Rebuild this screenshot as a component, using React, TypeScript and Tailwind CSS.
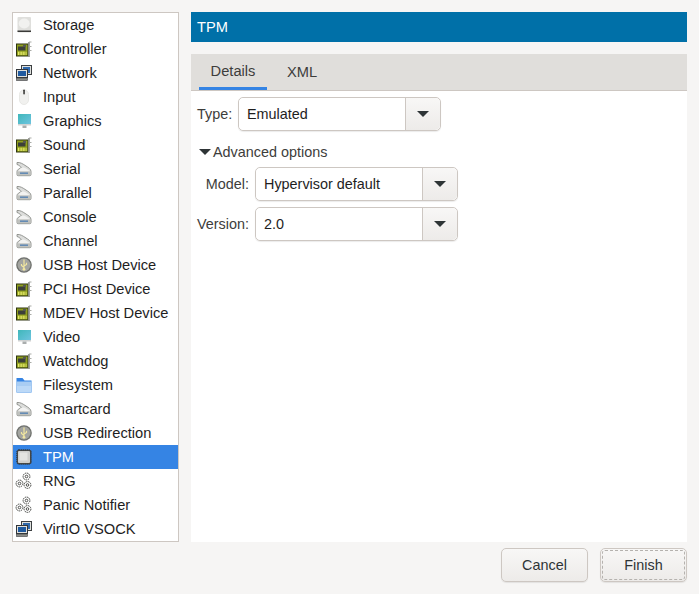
import React from "react";

type Kind = "disk" | "card" | "net" | "mouse" | "monitor" | "serial" | "usb" | "folder" | "chip" | "gears";

const devices: { label: string; icon: Kind }[] = [
  { label: "Storage", icon: "disk" },
  { label: "Controller", icon: "card" },
  { label: "Network", icon: "net" },
  { label: "Input", icon: "mouse" },
  { label: "Graphics", icon: "monitor" },
  { label: "Sound", icon: "card" },
  { label: "Serial", icon: "serial" },
  { label: "Parallel", icon: "serial" },
  { label: "Console", icon: "serial" },
  { label: "Channel", icon: "serial" },
  { label: "USB Host Device", icon: "usb" },
  { label: "PCI Host Device", icon: "card" },
  { label: "MDEV Host Device", icon: "card" },
  { label: "Video", icon: "monitor" },
  { label: "Watchdog", icon: "card" },
  { label: "Filesystem", icon: "folder" },
  { label: "Smartcard", icon: "serial" },
  { label: "USB Redirection", icon: "usb" },
  { label: "TPM", icon: "chip" },
  { label: "RNG", icon: "gears" },
  { label: "Panic Notifier", icon: "gears" },
  { label: "VirtIO VSOCK", icon: "net" },
];

const Gear = ({ cx, cy }: { cx: number; cy: number }) => (
  <g stroke="#3f413d">
    <circle cx={cx} cy={cy} r="3.4" fill="none" strokeWidth="1" strokeDasharray="1.6 0.7" />
    <circle cx={cx} cy={cy} r="1.3" fill="#fff" strokeWidth="0.9" />
  </g>
);

const DeviceIcon = ({ kind }: { kind: Kind }) => {
  switch (kind) {
    case "disk":
      return (
        <svg viewBox="0 0 16 16" className="w-4 h-4">
          <rect x="1.5" y="0" width="13.5" height="15.5" rx="1" fill="#dfdfdc" />
          <ellipse cx="8.2" cy="6.5" rx="5.5" ry="5" fill="#f1f1ef" />
          <rect x="1.5" y="13.5" width="13.5" height="1.5" fill="#3a3a38" />
        </svg>
      );
    case "card":
      return (
        <svg viewBox="0 0 16 16" className="w-4 h-4">
          <rect x="0.5" y="3" width="11.5" height="12" fill="#8f9f1e" stroke="#2e3410" />
          <rect x="2" y="5.5" width="7.5" height="4" fill="#3b3f38" />
          <rect x="7" y="4" width="3" height="2" fill="#555753" />
          <path d="M2 11.5h8.5M2 13.2h8.5" stroke="#e4e86a" strokeWidth="1.7" strokeDasharray="1 0.6" />
          <path d="M13 1v15" stroke="#888a85" strokeWidth="1.6" />
          <path d="M13 1h2.5M13 5.5h2.5M13 9.5h2.5" stroke="#a9aba6" />
        </svg>
      );
    case "net":
      return (
        <svg viewBox="0 0 16 16" className="w-4 h-4">
          <rect x="5.5" y="0.5" width="10" height="9" fill="#dfe1de" stroke="#3c3f41" />
          <rect x="7" y="2" width="7" height="6" fill="#2f69ad" />
          <rect x="0.5" y="4.5" width="11" height="8" fill="#dfe1de" stroke="#33363a" />
          <rect x="2" y="6" width="8" height="5" fill="#1f5aa0" />
          <rect x="0.5" y="13" width="11" height="2.5" fill="#8b8d88" stroke="#3c3f41" strokeWidth="0.6" />
        </svg>
      );
    case "mouse":
      return (
        <svg viewBox="0 0 16 16" className="w-4 h-4">
          <rect x="3.5" y="1" width="9" height="14.5" rx="4.5" fill="#f1f1ef" stroke="#e8e8e5" />
          <rect x="7.3" y="0.5" width="1.5" height="5" rx="0.7" fill="#2e2e2c" />
        </svg>
      );
    case "monitor":
      return (
        <svg viewBox="0 0 16 16" className="w-4 h-4">
          <defs>
            <linearGradient id="scr" x1="0" y1="0" x2="1" y2="1">
              <stop offset="0" stopColor="#3fb7ba" />
              <stop offset="1" stopColor="#6fc4e0" />
            </linearGradient>
          </defs>
          <rect x="2" y="1" width="13" height="10.5" fill="url(#scr)" />
          <rect x="2" y="11" width="13" height="1.5" fill="#cfd2d2" />
          <rect x="6.5" y="12.5" width="4" height="2.5" fill="#a9adad" />
        </svg>
      );
    case "serial":
      return (
        <svg viewBox="0 0 16 16" className="w-4 h-4">
          <path
            d="M1 1.5C4 1 7 3 10 5c2.3 1.5 5 3 5 5.500v3q0 1.200-1.200 1.200H2.200Q1 14.700 1 13.500V10.500c0-1.800 2.500-3 4.300-4C4 5 2.500 3.800 1 3.500z"
            fill="#dcdddb"
            stroke="#8a8c88"
            strokeWidth="0.9"
          />
          <path d="M5 7c2-1 3-.5 4.500.2S13 9.300 13.500 10H3c.5-1.300 1-2.200 2-3z" fill="#f2f2f1" />
          <path d="M1.500 10.500h13v3q0 .8-.8.800H2.300q-.8 0-.8-.8z" fill="#bfc1be" />
          <path d="M4 12.200h8" stroke="#5f88b4" strokeWidth="1.500" />
        </svg>
      );
    case "usb":
      return (
        <svg viewBox="0 0 16 16" className="w-4 h-4">
          <circle cx="8" cy="8" r="7.800" fill="#6f716d" />
          <circle cx="8" cy="8" r="6.500" fill="#a3a4a0" />
          <path d="M8 2.500v10M8 10.500 5.500 8.500V7M8 9l2.500-1.500V5.800" fill="none" stroke="#f2e7a0" strokeWidth="1.200" />
          <circle cx="8" cy="12.300" r="1.400" fill="#f2e7a0" />
        </svg>
      );
    case "folder":
      return (
        <svg viewBox="0 0 16 16" className="w-4 h-4">
          <path d="M0.500 1h6l2 2.500h7v12h-15z" fill="#3584e4" />
          <rect x="0.500" y="4.500" width="15" height="11" fill="#a9cdf3" />
          <rect x="1" y="9" width="14" height="6" fill="#bcd9f7" />
        </svg>
      );
    case "chip":
      return (
        <svg viewBox="0 0 16 16" className="w-4 h-4">
          <rect x="0.800" y="0.800" width="14.400" height="14.400" rx="2" fill="#4a4b49" stroke="#2e2e2c" strokeDasharray="1 1" />
          <rect x="2" y="2" width="12" height="12" rx="1" fill="#cfcfcc" />
          <rect x="3.500" y="3.500" width="8" height="8" fill="#e4e4e1" />
        </svg>
      );
    default:
      return (
        <svg viewBox="0 0 16 16" className="w-4 h-4 overflow-visible">
          <Gear cx={10.500} cy={3.500} />
          <Gear cx={3.500} cy={10.500} />
          <Gear cx={11.500} cy={12} />
        </svg>
      );
  }
};

const Combo = ({ value }: { value: string }) => (
  <div className="flex h-[34px] w-[203px] rounded-[5px] border border-[#cdc7c2] shadow-[0_1px_1px_rgba(0,0,0,0.08)]">
    <div className="flex-1 bg-white rounded-l-[5px] pl-2 pt-px flex items-center text-[#1e1e1e]">{value}</div>
    <div className="w-[35px] border-l border-[#cdc7c2] bg-gradient-to-b from-[#f8f7f6] to-[#edebe9] rounded-r-[5px] flex items-center justify-center">
      <span className="w-0 h-0 border-x-[6px] border-x-transparent border-t-[6px] border-t-[#2e3436]" />
    </div>
  </div>
);

export default function App() {
  return (
    <div className="h-[594px] w-[699px] bg-[#f6f5f4] flex flex-col text-[14.67px] font-['Liberation_Sans',sans-serif] overflow-hidden">
      <div className="flex gap-3 pl-3 pr-3 pt-3 h-[542px]">
        <div className="w-[167px] h-[530px] border border-[#cdc7c2] bg-white shrink-0">
          {devices.map((d) => (
            <div
              key={d.label}
              className={`h-6 flex items-center pl-[3px] ${d.label === "TPM" ? "bg-[#3584e4] text-white" : "text-[#1e1e1e]"}`}
            >
              <DeviceIcon kind={d.icon} />
              <span className="ml-[11px]">{d.label}</span>
            </div>
          ))}
        </div>
        <div className="flex-1 flex flex-col">
          <div className="h-[30px] bg-[#0070a8] text-white flex items-center px-[6px] shrink-0">TPM</div>
          <div className="mt-3 h-[37px] bg-[#e0dedb] border-b border-[#cdc7c2] flex pl-2 shrink-0">
            <div className="w-[68px] h-[36px] border-b-[3px] border-[#3584e4] flex items-center justify-center text-[#3d3d3b]">Details</div>
            <div className="w-[70px] h-[36px] flex items-center justify-center text-[#3d3d3b]">XML</div>
          </div>
          <div className="flex-1 bg-white pl-1.5 pt-1.5 text-[#3d3d3b] text-[14.4px]">
            <div className="flex items-center gap-[6px]">
              <span className="w-[35px] pt-px">Type:</span>
              <Combo value="Emulated" />
            </div>
            <div className="flex items-center mt-3 h-[18px] ml-0.5">
              <span className="w-0 h-0 border-x-[6px] border-x-transparent border-t-[6px] border-t-[#2e3436]" />
              <span className="ml-[2px] pt-px">Advanced options</span>
            </div>
            <div className="flex items-center gap-[6px] mt-[6px]">
              <span className="w-[52px] text-right pt-px">Model:</span>
              <Combo value="Hypervisor default" />
            </div>
            <div className="flex items-center gap-[6px] mt-1.5">
              <span className="w-[52px] text-right pt-px">Version:</span>
              <Combo value="2.0" />
            </div>
          </div>
        </div>
      </div>
      <div className="flex justify-end gap-3 pr-3 mt-1.5 text-[#2e3436] text-[14.4px]">
        <button className="w-[87px] h-[34px] pt-px rounded-[5px] border border-[#cdc7c2] bg-gradient-to-b from-[#f8f7f6] to-[#edebe9] shadow-[0_1px_1px_rgba(0,0,0,0.08)]">
          Cancel
        </button>
        <button className="w-[87px] h-[34px] rounded-[5px] border border-[#cdc7c2] bg-gradient-to-b from-[#f8f7f6] to-[#edebe9] shadow-[0_1px_1px_rgba(0,0,0,0.08)] p-px">
          <span className="flex items-center justify-center w-full h-full pt-px rounded-[3px] border border-dashed border-[#b5b2ae]">Finish</span>
        </button>
      </div>
    </div>
  );
}
